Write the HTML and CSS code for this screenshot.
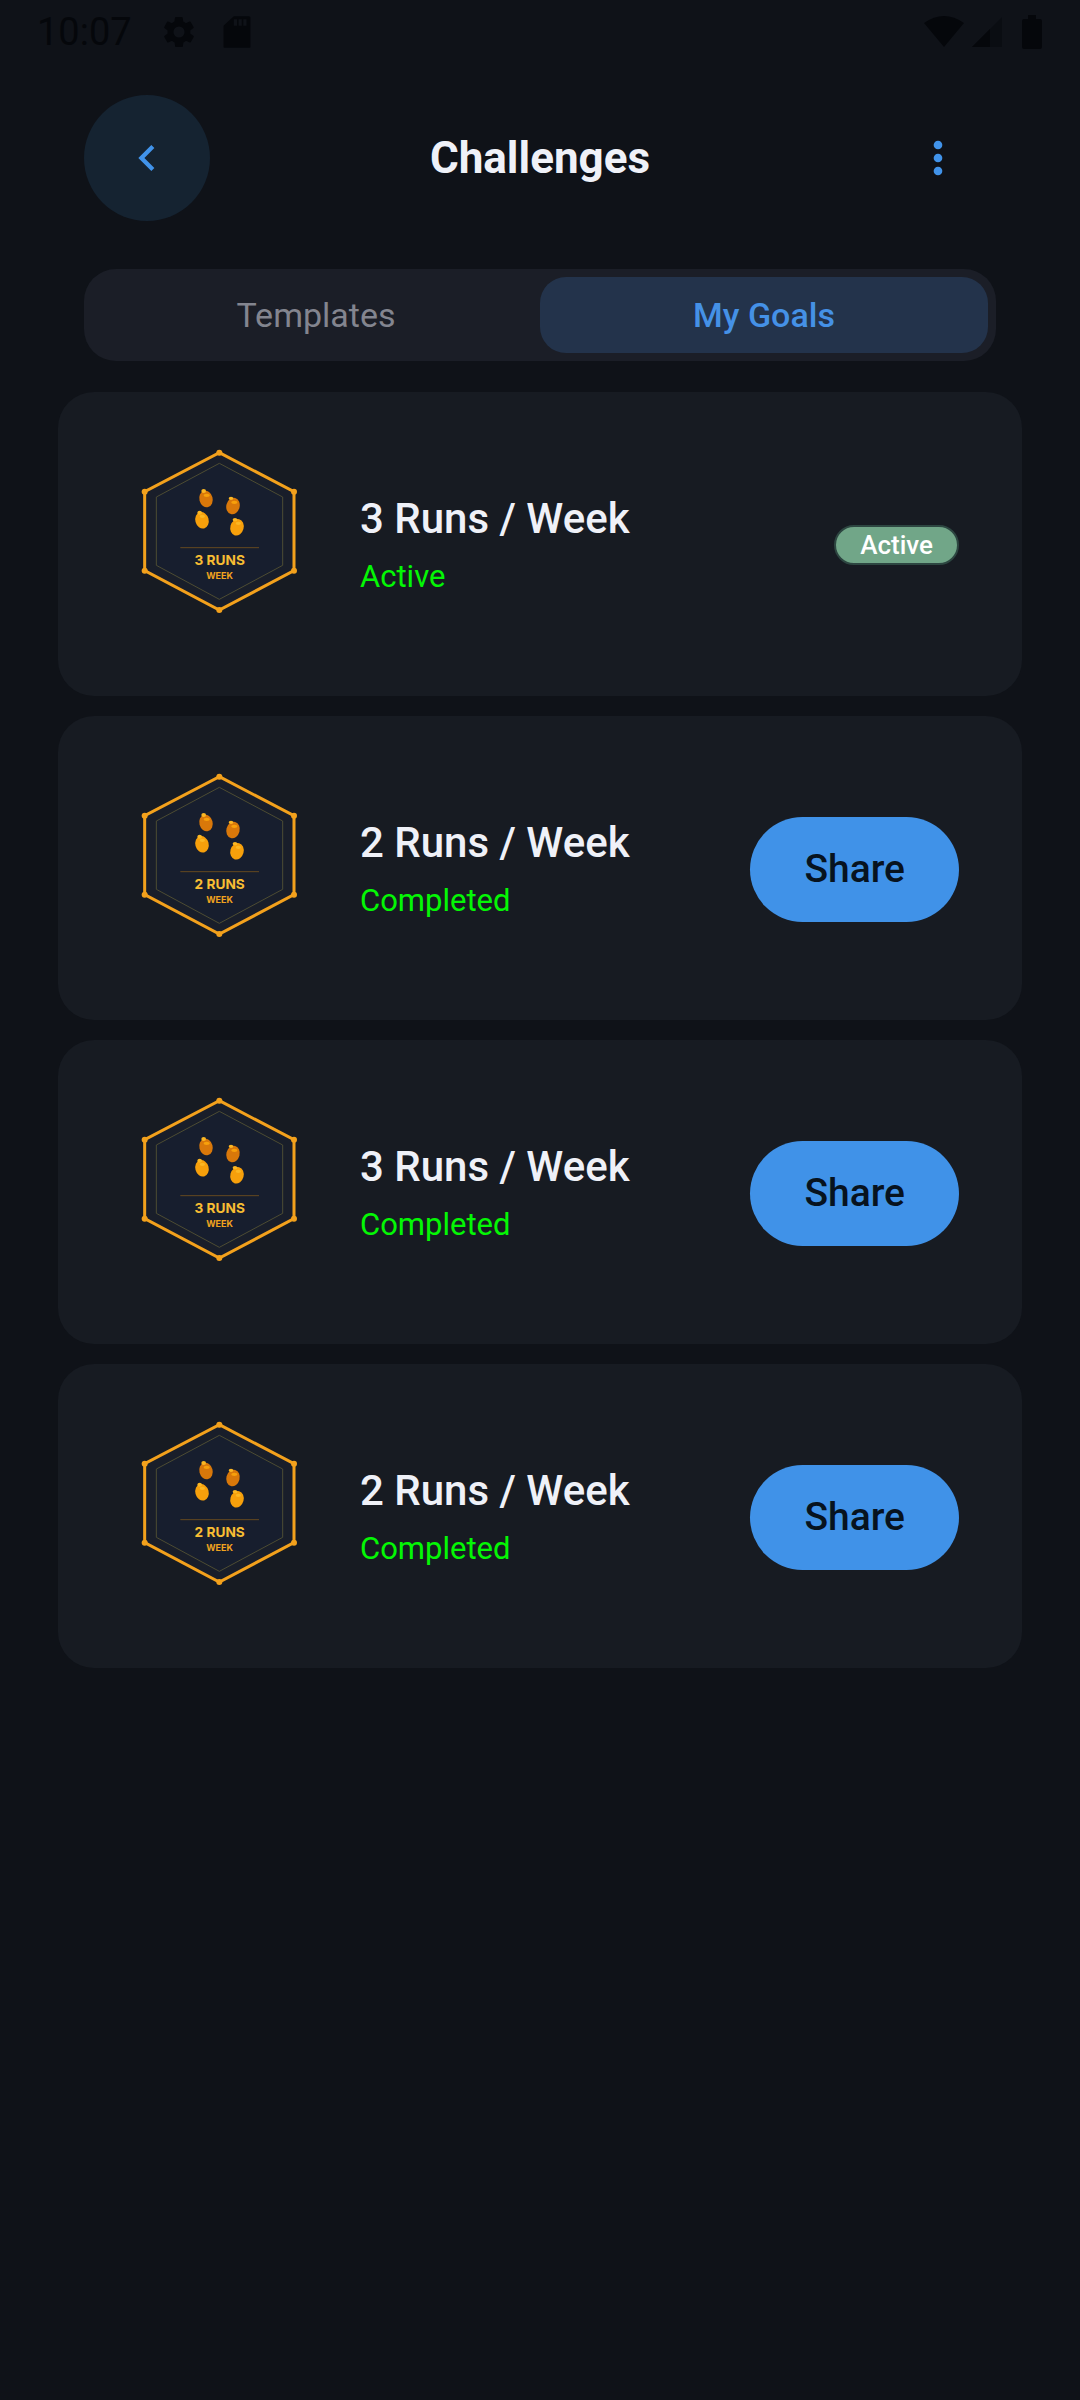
FILE: index.html
```html
<!DOCTYPE html>
<html lang="en">
<head>
<meta charset="utf-8">
<meta name="viewport" content="width=device-width, initial-scale=1">
<title>Challenges</title>
<link rel="stylesheet" href="styles.css">
</head>
<body>
<svg class="defs" aria-hidden="true">
  <symbol id="badge" viewBox="60 60 480 480" overflow="visible">
    <path d="M298 65 522 182V419L298 537 74 419V182Z" fill="#191e2a"/>
    <path d="M298 97 488 198V403L298 505 109 403V198Z" fill="#171e2e" stroke="#4d4c33" stroke-width="3"/>
    <path d="M298 65 522 182V419L298 537 74 419V182Z" fill="none" stroke="#f3a11c" stroke-width="9"/>
    <g fill="#f3a11c">
      <circle cx="298" cy="65" r="9"/><circle cx="522" cy="182" r="9"/><circle cx="522" cy="419" r="9"/>
      <circle cx="298" cy="537" r="9"/><circle cx="74" cy="419" r="9"/><circle cx="74" cy="182" r="9"/>
    </g>
    <g fill="#d9780a">
      <ellipse cx="258" cy="204" rx="20" ry="25" transform="rotate(-15 258 204)"/>
      <ellipse cx="339" cy="225" rx="20" ry="25" transform="rotate(15 339 225)"/>
    </g>
    <g fill="#f7a00b">
      <ellipse cx="246" cy="268" rx="20" ry="25" transform="rotate(-15 246 268)"/>
      <ellipse cx="351" cy="289" rx="20" ry="25" transform="rotate(15 351 289)"/>
      <ellipse cx="260" cy="193" rx="9" ry="5"/><ellipse cx="343" cy="214" rx="9" ry="5"/>
    </g>
    <g fill="#fbb723">
      <ellipse cx="251" cy="180" rx="7" ry="6"/><ellipse cx="333" cy="202" rx="7" ry="5"/>
      <ellipse cx="239" cy="245" rx="7" ry="6"/><ellipse cx="345" cy="266" rx="7" ry="5"/>
      <ellipse cx="247" cy="256" rx="8" ry="5"/><ellipse cx="355" cy="277" rx="8" ry="5"/>
    </g>
    <path d="M181 350H417" stroke="#64491f" stroke-width="3"/>
  </symbol>
</svg>

<div class="status">
  <div class="status-group status-left">
    <time class="clock">10:07</time>
    <svg class="status-icon" viewBox="0 0 24 24"><path fill-rule="evenodd" d="M19.1 12.9a7 7 0 0 0 0-1.8l2-1.6a.5.5 0 0 0 .1-.6l-1.9-3.3a.5.5 0 0 0-.6-.2l-2.4 1a7 7 0 0 0-1.6-1l-.4-2.5a.5.5 0 0 0-.5-.4h-3.8a.5.5 0 0 0-.5.4l-.4 2.5a7 7 0 0 0-1.6 1l-2.4-1a.5.5 0 0 0-.6.2L2.700 8.900a.5.5 0 0 0 .1.6l2 1.600a7 7 0 0 0 0 1.800l-2 1.600a.5.5 0 0 0-.1.6l1.900 3.300c.1.2.4.3.6.2l2.400-1a7 7 0 0 0 1.600 1l.4 2.500c0 .2.200.4.500.4h3.800c.2 0 .5-.2.5-.4l.4-2.500a7 7 0 0 0 1.600-1l2.400 1c.2.1.5 0 .6-.2l1.900-3.300a.5.5 0 0 0-.1-.6zM12 15.500a3.500 3.500 0 1 1 0-7 3.500 3.500 0 0 1 0 7z"/></svg>
    <svg class="status-icon" viewBox="0 0 24 24"><path fill-rule="evenodd" d="M19.500 2H10L3.500 8v13.500a.5.5 0 0 0 .5.5h16a.5.5 0 0 0 .5-.5V3a1 1 0 0 0-1-1zM10 4h2v4h-2zM13 4h2v4h-2zM16 4h2v4h-2z"/></svg>
  </div>
  <div class="status-group status-right">
    <svg class="wifi" viewBox="0 0 40 32"><path d="M0 7Q20-7 40 7L20 31Z"/></svg>
    <svg class="signal" viewBox="0 0 30 30"><path d="M0 30 30 0V30Z" opacity=".5"/><path d="M0 30 18 12V30Z"/></svg>
    <svg class="battery" viewBox="0 0 20 34"><path d="M6 0h8v4h4a2 2 0 0 1 2 2v26a2 2 0 0 1-2 2H2a2 2 0 0 1-2-2V6a2 2 0 0 1 2-2h4Z"/></svg>
  </div>
</div>

<header class="header">
  <button class="back" type="button" aria-label="Back">
    <svg class="icon" viewBox="0 0 24 24"><path d="M15.400 7.400 14 6l-6 6 6 6 1.400-1.400L10.800 12z"/></svg>
  </button>
  <h1 class="title">Challenges</h1>
  <button class="more" type="button" aria-label="More options">
    <svg class="icon" viewBox="0 0 24 24"><circle cx="12" cy="6" r="2"/><circle cx="12" cy="12" r="2"/><circle cx="12" cy="18" r="2"/></svg>
  </button>
</header>

<nav class="tabs">
  <button class="tab" type="button">Templates</button>
  <button class="tab selected" type="button" aria-current="page">My Goals</button>
</nav>

<main class="goals">
  <article class="card">
    <svg class="badge" viewBox="60 60 480 480"><use href="#badge" x="60" y="60" width="480" height="480"/><text class="badge-count" x="299" y="401">3 RUNS</text><text class="badge-unit" x="299" y="444">WEEK</text></svg>
    <div class="info"><h2 class="name">3 Runs / Week</h2><p class="state">Active</p></div>
    <span class="pill">Active</span>
  </article>
  <article class="card">
    <svg class="badge" viewBox="60 60 480 480"><use href="#badge" x="60" y="60" width="480" height="480"/><text class="badge-count" x="299" y="401">2 RUNS</text><text class="badge-unit" x="299" y="444">WEEK</text></svg>
    <div class="info"><h2 class="name">2 Runs / Week</h2><p class="state">Completed</p></div>
    <button class="share" type="button">Share</button>
  </article>
  <article class="card">
    <svg class="badge" viewBox="60 60 480 480"><use href="#badge" x="60" y="60" width="480" height="480"/><text class="badge-count" x="299" y="401">3 RUNS</text><text class="badge-unit" x="299" y="444">WEEK</text></svg>
    <div class="info"><h2 class="name">3 Runs / Week</h2><p class="state">Completed</p></div>
    <button class="share" type="button">Share</button>
  </article>
  <article class="card">
    <svg class="badge" viewBox="60 60 480 480"><use href="#badge" x="60" y="60" width="480" height="480"/><text class="badge-count" x="299" y="401">2 RUNS</text><text class="badge-unit" x="299" y="444">WEEK</text></svg>
    <div class="info"><h2 class="name">2 Runs / Week</h2><p class="state">Completed</p></div>
    <button class="share" type="button">Share</button>
  </article>
</main>
</body>
</html>
```
FILE: styles.css
```css
* {
  box-sizing: border-box;
}

body {
  margin: 0;
  min-height: 100vh;
  background: #0f1218;
  color: #eff1f8;
  font-family: Roboto, sans-serif;
}

h1, h2, p {
  margin: 0;
}

button {
  border: 0;
  padding: 0;
  background: none;
  font-family: inherit;
  cursor: pointer;
}

.defs {
  display: none;
}

/* Status bar */
.status {
  display: flex;
  justify-content: space-between;
  align-items: center;
  height: 64px;
  padding: 0 38px 0 37px;
  color: #05070b;
  fill: #05070b;
}

.status-group {
  display: flex;
  align-items: center;
}

.status-left {
  gap: 20px;
}

.status-right {
  gap: 8px;
}

.clock {
  margin-right: 8px;
  font-size: 38px;
  line-height: 44px;
}

.status-icon {
  width: 38px;
  height: 38px;
}

.wifi {
  width: 40px;
  height: 32px;
}

.signal {
  width: 30px;
  height: 30px;
}

.battery {
  width: 20px;
  height: 34px;
  margin-left: 12px;
}

/* Header */
.header {
  display: grid;
  grid-template-columns: 1fr auto 1fr;
  align-items: center;
  padding: 31px 84px 48px;
}

.back,
.more {
  display: flex;
  align-items: center;
  justify-content: center;
  height: 126px;
  fill: #4193ea;
}

.back {
  width: 126px;
  border-radius: 50%;
  background: #152331;
}

.more {
  width: 116px;
  justify-self: end;
}

.icon {
  width: 52px;
  height: 52px;
}

.title {
  font-size: 44px;
  font-weight: 700;
  line-height: 52px;
}

/* Tabs */
.tabs {
  display: flex;
  margin: 0 84px 31px;
  padding: 8px;
  border-radius: 32px;
  background: #1b1e27;
}

.tab {
  flex: 1;
  height: 76px;
  border-radius: 26px;
  color: #83858f;
  font-size: 34px;
}

.selected {
  background: #23334b;
  color: #4591e6;
  font-weight: 500;
}

/* Goal cards */
.goals {
  display: flex;
  flex-direction: column;
  gap: 20px;
  padding: 0 58px;
}

.card {
  display: flex;
  align-items: center;
  padding: 59px 63px 57px 82px;
  border-radius: 36px;
  background: #171b22;
}

.badge {
  flex: none;
  width: 160px;
  height: 160px;
  margin: 0 60px 28px 0;
  overflow: visible;
  font-family: Inter, sans-serif;
  font-weight: 700;
  text-anchor: middle;
}

.badge-count {
  fill: #f7bd33;
  font-size: 41px;
}

.badge-unit {
  fill: #f0a31e;
  font-size: 27px;
}

.info {
  display: flex;
  flex: 1;
  flex-direction: column;
  gap: 11px;
}

.name {
  font-size: 42px;
  font-weight: 500;
  line-height: 52px;
}

.state {
  color: #04f704;
  font-size: 31px;
  line-height: 42px;
}

.pill {
  padding: 4px 24px;
  border: 2px solid #2d4641;
  border-radius: 20px;
  background: #71a688;
  color: #fff;
  font-size: 26px;
  font-weight: 500;
  line-height: 28px;
}

.share {
  padding: 0 54px;
  border-radius: 53px;
  background: #4092e8;
  color: #07131f;
  font-size: 39px;
  font-weight: 500;
  line-height: 105px;
}
```
